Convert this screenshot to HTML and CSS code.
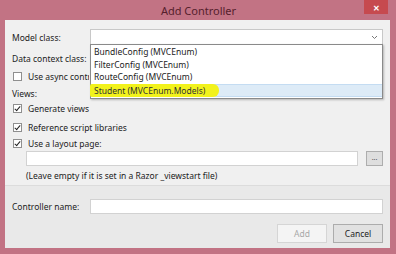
FILE: index.html
```html
<!DOCTYPE html>
<html>
<head>
<meta charset="utf-8">
<link rel="stylesheet" href="styles.css">
</head>
<body>
<div class="window">
  <div class="titlebar">
    <span class="title">Add Controller</span>
    <span class="close">✕</span>
  </div>
  <div class="client">
    <div class="upper">
      <div class="row row-model">
        <span class="label">Model class:</span>
        <div class="combo">
          <svg class="chev" width="7" height="5" viewBox="0 0 7 5"><path d="M1 1 L3.5 3.5 L6 1" fill="none" stroke="#777" stroke-width="1"/></svg>
          <div class="dropdown">
            <div class="item">BundleConfig (MVCEnum)</div>
            <div class="item">FilterConfig (MVCEnum)</div>
            <div class="item">RouteConfig (MVCEnum)</div>
            <div class="item selected"><span class="hl">Student (MVCEnum.Models)</span></div>
          </div>
        </div>
      </div>
      <div class="row row-data"><span class="label">Data context class:</span></div>
      <div class="row row-async"><span class="cb"></span><span class="cbtext clip">Use async controller actions</span></div>
      <div class="row row-views"><span class="label">Views:</span></div>
      <div class="row row-gen"><span class="cb checked"></span><span class="cbtext">Generate views</span></div>
      <div class="row row-ref"><span class="cb checked"></span><span class="cbtext">Reference script libraries</span></div>
      <div class="row row-layout"><span class="cb checked"></span><span class="cbtext">Use a layout page:</span></div>
      <div class="row row-path">
        <div class="textbox path"></div>
        <div class="browse">...</div>
      </div>
      <div class="row row-hint"><span class="hint">(Leave empty if it is set in a Razor _viewstart file)</span></div>
    </div>
    <div class="lower">
      <div class="row row-name">
        <span class="label">Controller name:</span>
        <div class="textbox name"></div>
      </div>
      <div class="buttons">
        <div class="btn disabled">Add</div>
        <div class="btn">Cancel</div>
      </div>
    </div>
  </div>
</div>
</body>
</html>
```
FILE: styles.css
```css
html, body { margin: 0; padding: 0; }
body { width: 396px; height: 254px; overflow: hidden; background: #c27384; }
.window {
  width: 396px; height: 254px; box-sizing: border-box;
  background: #c27384;
  padding: 0 6px 6px 5px;
  display: flex; flex-direction: column;
  font-family: "Noto Sans", "Open Sans", sans-serif;
  font-size: 8.5px; color: #222;
}
.titlebar {
  height: 20px; flex: none; position: relative;
  display: flex; align-items: center; justify-content: center;
}
.title { font-size: 11px; color: #55202c; margin-left: 2px; }
.close {
  position: absolute; right: 2px; top: 0; width: 24px; height: 14px;
  background: #c64a4f; color: #fff; font-size: 8px; font-weight: bold;
  display: flex; align-items: center; justify-content: center;
}
.client { flex: 1; display: flex; flex-direction: column; background: #f0f0f0; }
.upper { height: 166px; border-bottom: 1px solid #dcdcdc; box-sizing: border-box; padding: 9px 7px 0 7px; }
.lower { flex: 1; background: #e9e9e9; padding: 13px 7px 0 7px; }
.row { display: flex; align-items: center; }
.label { width: 78px; flex: none; }
.row-model { height: 16px; }
.combo {
  flex: 1; height: 16px; box-sizing: border-box; background: #fff;
  border: 1px solid #c8c8c8; position: relative;
}
.chev { position: absolute; right: 4px; top: 5px; }
.dropdown {
  position: absolute; left: -1px; right: -1px; top: 14px;
  background: #fff; border: 1px solid #8a8a8a;
  box-shadow: 1px 1px 2px rgba(0,0,0,0.25);
  padding: 1px 0 1px 0; z-index: 2;
}
.item { height: 12.5px; line-height: 12.5px; padding-left: 3px; white-space: nowrap; }
.item.selected { background: #ddebf7; border-top: 1px solid #c4dcf2; border-bottom: 1px solid #c4dcf2; height: 11.5px; line-height: 11.5px; }
.hl {
  background: #f2f21c; margin-left: -4px; padding: 1px 14px 1px 4px;
  border-radius: 2px 6px 6px 2px; color: #333;
}
.row-data { height: 14px; margin-top: 6px; }
.row-async { height: 12px; margin-top: 5px; }
.row-views { height: 12px; margin-top: 5px; }
.row-gen { height: 12px; margin-top: 3px; }
.row-ref { height: 12px; margin-top: 7px; }
.row-layout { height: 12px; margin-top: 4px; }
.cbtext { white-space: nowrap; }
.clip { max-width: 61px; overflow: hidden; }
.cb {
  width: 9px; height: 9px; flex: none; box-sizing: border-box;
  border: 1px solid #8f8f8f; background: #fff; margin-right: 6px; margin-left: 1px; position: relative;
}
.cb.checked::after {
  content: ""; position: absolute; left: 2px; top: 0px; width: 2px; height: 5px;
  border: solid #222; border-width: 0 1.5px 1.5px 0; transform: rotate(40deg);
}
.row-path { margin-top: 2px; height: 15px; padding-left: 14px; }
.textbox { background: #fff; border: 1px solid #d2d2d2; box-sizing: border-box; }
.path { flex: 1; height: 15px; }
.browse {
  width: 17px; height: 15px; margin-left: 8px; box-sizing: border-box;
  border: 1px solid #adadad; background: #dedede; font-size: 7px; color: #555;
  display: flex; align-items: center; justify-content: center; padding-bottom: 3px;
}
.row-hint { margin-top: 3px; height: 12px; padding-left: 14px; }
.row-name { height: 15px; }
.name { flex: 1; height: 15px; }
.buttons { display: flex; justify-content: flex-end; gap: 6px; margin-top: 10px; }
.btn {
  width: 50px; height: 19px; box-sizing: border-box; border: 1px solid #acacac;
  background: #e1e1e1; display: flex; align-items: center; justify-content: center; color: #222;
}
.btn.disabled { background: #f4f4f4; border-color: #d5d5d5; color: #a8a8a8; }
```
